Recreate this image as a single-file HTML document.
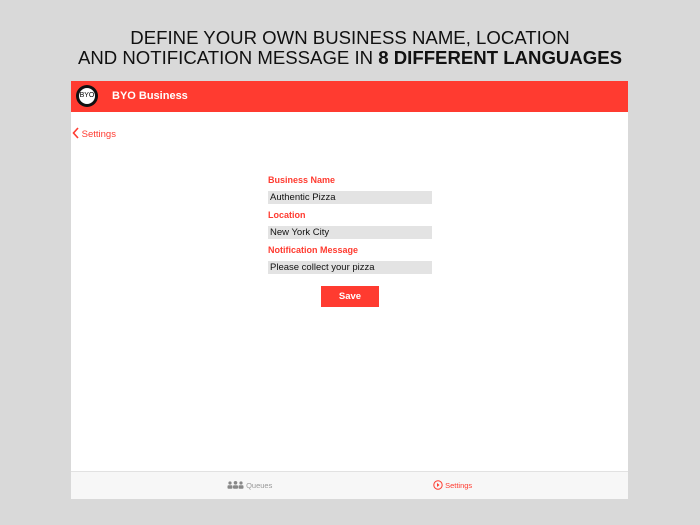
<!DOCTYPE html>
<html><head><meta charset="utf-8"><style>
body{margin:0;width:700px;height:525px;background:#d9d9d9;position:relative;overflow:hidden;font-family:"Liberation Sans",sans-serif}
.t{position:absolute;left:0;width:700px;text-align:center;font-size:18.6px;color:#111;line-height:24px}
.app{position:absolute;left:71px;top:81px;width:557px;height:417px;background:#fff}
.hdr{position:absolute;left:0;top:0;width:557px;height:31px;background:#ff3b30}
.hdr .ti{position:absolute;left:41px;top:9px;color:#fff;font-size:11px;font-weight:bold}
.logo{position:absolute;left:5px;top:4px;width:22px;height:22px;border-radius:50%;background:#111}
.logo div{position:absolute;left:3px;top:3px;width:16px;height:16px;border-radius:50%;background:#fff;font-size:7px;line-height:16px;text-align:center;color:#000}
.back{position:absolute;left:1px;top:46px;color:#ff3b30;font-size:9.5px}
.lbl{position:absolute;left:197px;color:#ff3b30;font-size:9px;font-weight:bold}
.in{position:absolute;left:197px;width:164px;height:13px;background:#e3e3e3;font-size:9.5px;line-height:13px;padding-left:2px;box-sizing:border-box;color:#111}
.save{position:absolute;left:250px;top:205px;width:58px;height:21px;background:#ff3b30;color:#fff;font-size:9.5px;font-weight:bold;text-align:center;line-height:21px}
.tab{position:absolute;left:0;top:390px;width:557px;height:27px;background:#f7f7f7;border-top:1px solid #e2e2e2;font-size:7.5px}
</style></head><body>
<div class="t" style="top:26px">DEFINE YOUR OWN BUSINESS NAME, LOCATION</div>
<div class="t" style="top:46px">AND NOTIFICATION MESSAGE IN <b>8 DIFFERENT LANGUAGES</b></div>
<div class="app">
<div class="hdr"><div class="logo"><div>BYO</div></div><div class="ti">BYO Business</div></div>
<div class="back"><svg width="7" height="12" style="vertical-align:-2px" viewBox="0 0 7 12"><path d="M6 1L1.5 6L6 11" stroke="#ff3b30" stroke-width="1.6" fill="none"/></svg> Settings</div>
<div class="lbl" style="top:94px">Business Name</div>
<div class="in" style="top:110px">Authentic Pizza</div>
<div class="lbl" style="top:129px">Location</div>
<div class="in" style="top:145px">New York City</div>
<div class="lbl" style="top:164px">Notification Message</div>
<div class="in" style="top:180px">Please collect your pizza</div>
<div class="save">Save</div>
<div class="tab">
<div style="position:absolute;left:156px;top:9px;color:#999"><svg width="17" height="8" viewBox="0 0 17 8" style="vertical-align:-1px"><g fill="#888"><circle cx="3" cy="2" r="1.6"/><circle cx="8.5" cy="1.8" r="1.8"/><circle cx="14" cy="2" r="1.6"/><rect x="0.5" y="4.3" width="5" height="3.5" rx="1"/><rect x="6" y="4.3" width="5" height="3.5" rx="1"/><rect x="11.5" y="4.3" width="5" height="3.5" rx="1"/></g></svg> Queues</div>
<div style="position:absolute;left:362px;top:8px;color:#ff3b30"><svg width="10" height="10" viewBox="0 0 10 10" style="vertical-align:-2px"><circle cx="5" cy="5" r="4.2" stroke="#ff3b30" fill="none" stroke-width="1"/><path d="M4 3L6.5 5L4 7Z" fill="#ff3b30"/></svg> Settings</div>
</div>
</div>
</body></html>
